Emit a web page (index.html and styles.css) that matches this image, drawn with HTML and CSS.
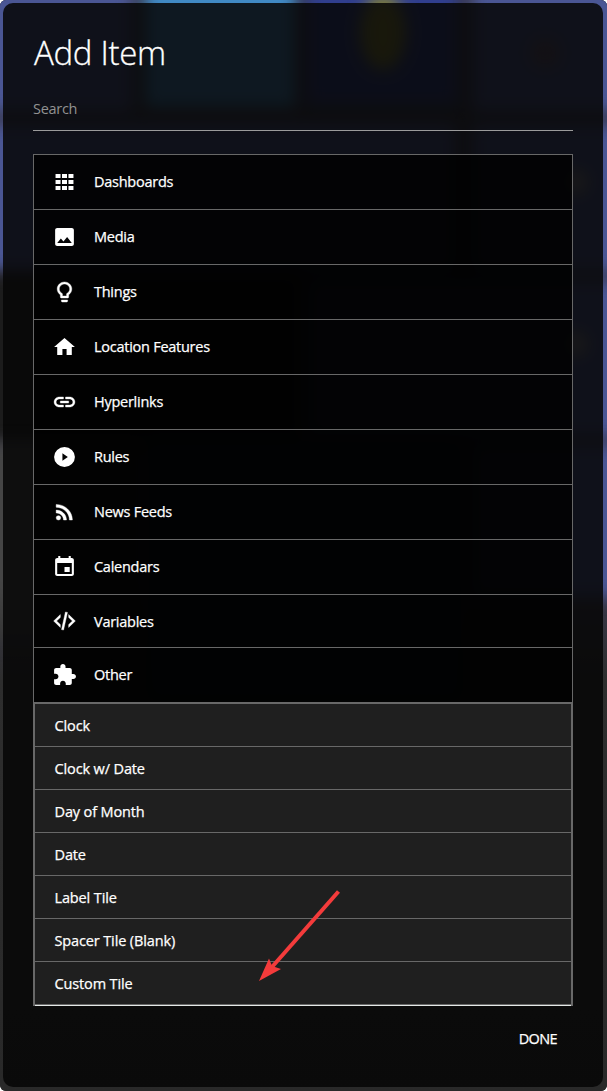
FILE: index.html
```html
<!DOCTYPE html>
<html lang="en">
<head>
<meta charset="utf-8">
<title>Add Item</title>
<link rel="stylesheet" href="styles.css">
</head>
<body>
<div class="frame">
  <div class="backdrop">
    <i class="tile t-top-left"></i><i class="tile t-cyan"></i><i class="tile t-navy"></i><i class="tile t-top-right"></i>
    <i class="tile t-row2"></i><i class="tile t-row2-right"></i><i class="tile t-row3"></i><i class="tile t-row3-right"></i>
    <i class="tile t-row4-right"></i><i class="tile t-gray"></i><i class="tile t-teal"></i>
    <i class="glow g-bulb"></i><i class="glow g-top"></i><i class="glow g-edge1"></i><i class="glow g-edge2"></i>
  </div>
  <main class="dialog">
    <h1 class="title">Add Item</h1>
    <div class="search">Search</div>
    <div class="list">
      <div class="row"><svg class="icon" viewBox="0 0 24 24" preserveAspectRatio="none"><path d="M3.4 4h4.8v4H3.4zm6.2 0h4.8v4H9.6zm6.2 0h4.8v4h-4.8zM3.4 10h4.8v4H3.4zm6.2 0h4.8v4H9.6zm6.2 0h4.8v4h-4.8zM3.4 16h4.8v4H3.4zm6.2 0h4.8v4H9.6zm6.2 0h4.8v4h-4.8z"/></svg><span class="label">Dashboards</span></div>
      <div class="row"><svg class="icon" viewBox="0 0 24 24" preserveAspectRatio="none"><path d="M21 19V5c0-1.1-.9-2-2-2H5c-1.1 0-2 .9-2 2v14c0 1.1.9 2 2 2h14c1.1 0 2-.9 2-2zM8.5 13.5l2.5 3.01L14.5 12l4.5 6H5l3.5-4.5z"/></svg><span class="label">Media</span></div>
      <div class="row"><svg class="icon bold" viewBox="0 0 24 24" preserveAspectRatio="none"><path d="M9 21c0 .55.45 1 1 1h4c.55 0 1-.45 1-1v-1H9v1zm3-19C8.14 2 5 5.14 5 9c0 2.38 1.19 4.47 3 5.74V17c0 .55.45 1 1 1h6c.55 0 1-.45 1-1v-2.26c1.81-1.27 3-3.36 3-5.74 0-3.86-3.14-7-7-7zm2.85 11.1l-.85.6V16h-4v-2.3l-.85-.6C7.8 12.16 7 10.63 7 9c0-2.76 2.24-5 5-5s5 2.240 5 5c0 1.63-.8 3.16-2.15 4.1z"/></svg><span class="label">Things</span></div>
      <div class="row"><svg class="icon" viewBox="0 0 24 24" preserveAspectRatio="none"><path d="M10 20v-6h4v6h5v-8h3L12 3 2 12h3v8z"/></svg><span class="label">Location Features</span></div>
      <div class="row"><svg class="icon bold" viewBox="0 0 24 24" preserveAspectRatio="none"><path d="M3.9 12c0-1.71 1.39-3.1 3.1-3.1h4V7H7c-2.76 0-5 2.24-5 5s2.24 5 5 5h4v-1.9H7c-1.71 0-3.1-1.39-3.1-3.1zM8 13h8v-2H8v2zm9-6h-4v1.9h4c1.71 0 3.1 1.39 3.1 3.1s-1.39 3.1-3.1 3.1h-4V17h4c2.76 0 5-2.24 5-5s-2.24-5-5-5z"/></svg><span class="label">Hyperlinks</span></div>
      <div class="row"><svg class="icon" viewBox="0 0 24 24" preserveAspectRatio="none"><path fill-rule="evenodd" d="M12 2a10 10 0 1 0 0 20a10 10 0 1 0 0-20zM10 8.2v7.6l5.2-3.8z"/></svg><span class="label">Rules</span></div>
      <div class="row"><svg class="icon bold" viewBox="0 0 24 24" preserveAspectRatio="none"><circle cx="6.18" cy="17.82" r="2.18"/><path d="M4 4.44v2.83c7.03 0 12.73 5.7 12.73 12.73h2.83c0-8.59-6.97-15.56-15.56-15.56zm0 5.66v2.83c3.9 0 7.07 3.17 7.07 7.07h2.83c0-5.47-4.43-9.9-9.9-9.9z"/></svg><span class="label">News Feeds</span></div>
      <div class="row"><svg class="icon" viewBox="0 0 24 24" preserveAspectRatio="none"><path d="M17 12h-5v5h5v-5zM16 1v2H8V1H6v2H5c-1.11 0-1.99.9-1.99 2L3 19c0 1.1.89 2 2 2h14c1.1 0 2-.9 2-2V5c0-1.1-.9-2-2-2h-1V1h-2zm3 18H5V8h14v11z"/></svg><span class="label">Calendars</span></div>
      <div class="row short"><svg class="icon bold" viewBox="0 0 24 24" preserveAspectRatio="none"><path d="M12.89 3L14.85 3.4L11.11 21L9.15 20.6L12.89 3M19.59 12L16 8.41V5.58L22.42 12L16 18.41V15.58L19.59 12M1.58 12L8 5.58V8.41L4.41 12L8 15.58V18.41L1.58 12Z"/></svg><span class="label">Variables</span></div>
      <div class="row"><svg class="icon" viewBox="0 0 24 24" preserveAspectRatio="none"><path d="M20.5 11H19V7c0-1.1-.9-2-2-2h-4V3.5C13 2.12 11.88 1 10.5 1S8 2.12 8 3.5V5H4c-1.1 0-1.99.9-1.99 2v3.8H3.5c1.49 0 2.7 1.21 2.7 2.7s-1.21 2.7-2.7 2.7H2V20c0 1.1.9 2 2 2h3.8v-1.5c0-1.49 1.21-2.7 2.7-2.7 1.49 0 2.7 1.21 2.7 2.7V22H17c1.1 0 2-.9 2-2v-4h1.5c1.38 0 2.5-1.12 2.5-2.5S21.88 11 20.5 11z"/></svg><span class="label">Other</span></div>
      <div class="sublist">
        <div class="sub">Clock</div>
        <div class="sub">Clock w/ Date</div>
        <div class="sub">Day of Month</div>
        <div class="sub">Date</div>
        <div class="sub">Label Tile</div>
        <div class="sub">Spacer Tile (Blank)</div>
        <div class="sub">Custom Tile</div>
      </div>
    </div>
    <div class="actions"><span class="done">DONE</span></div>
  </main>
  <svg class="arrow" width="84" height="94" viewBox="0 0 84 94"><path class="shaft" d="M80.5 3.5L14 79"/><path class="head" d="M1 93L11 70.5L14 78L23 81z"/></svg>
</div>
</body>
</html>
```

FILE: styles.css
```css
* { box-sizing: border-box; }
body { margin: 0; background: #fff; font-family: "Open Sans", "Noto Sans", sans-serif; color: #fff; }
.frame { position: relative; width: 607px; height: 1091px; padding: 3px 4px 4px 3px; border-radius: 6px; overflow: hidden; background: #2a2a2a; }

/* Blurred dashboard showing through the dialog */
.backdrop { position: absolute; inset: 0; background: linear-gradient(#383746 0 600px, #2e2e2e 680px, #292929); }
.tile { position: absolute; background: #4a5694; filter: blur(8px); }
.t-top-left { left: -20px; top: -20px; width: 153px; height: 132px; }
.t-cyan { left: 145px; top: -20px; width: 151px; height: 127px; background: #4089c4; }
.t-navy { left: 306px; top: -20px; width: 152px; height: 125px; background: #303e8e; }
.t-top-right { left: 472px; top: -20px; width: 160px; height: 132px; }
.t-row2 { left: -20px; top: 124px; width: 475px; height: 148px; }
.t-row2-right { left: 472px; top: 124px; width: 160px; height: 148px; }
.t-row3 { left: -20px; top: 274px; width: 320px; height: 170px; background: #1c1c1c; }
.t-row3-right { left: 308px; top: 280px; width: 326px; height: 157px; }
.t-row4-right { left: 472px; top: 444px; width: 160px; height: 153px; }
.t-gray { left: -20px; top: 443px; width: 158px; height: 200px; background: linear-gradient(#454545 70%, #363636); }
.t-teal { left: 147px; top: 440px; width: 315px; height: 260px; background: #14384e; }
.glow { position: absolute; border-radius: 50%; filter: blur(8px); }
.g-bulb { left: 360px; top: -5px; width: 46px; height: 75px; background: #87842f; }
.g-top { left: 530px; top: 38px; width: 30px; height: 30px; background: #64536a; }
.g-edge1 { left: 565px; top: 170px; width: 22px; height: 24px; background: #918c88; }
.g-edge2 { left: 565px; top: 332px; width: 22px; height: 24px; background: #918c88; }

.dialog { position: relative; display: flex; flex-direction: column; width: 600px; height: 1084px; padding: 0 30px; border-radius: 10px; background: rgba(6, 6, 6, .86); }
.title { margin: 25px 0 0 1px; height: 50px; font-size: 33px; line-height: 49px; font-weight: 300; letter-spacing: -.3px; -webkit-text-stroke: .3px #fff; }
.search { margin-top: 17px; height: 36px; border-bottom: 1px solid #9b9b9b; font-size: 14.5px; line-height: 28px; letter-spacing: -.3px; color: #929292; }
.list { margin-top: 23px; height: 852px; border: 1px solid #686868; border-bottom: 0; background: rgba(0, 0, 0, .8); }
.row { display: flex; align-items: center; gap: 17.5px; height: 55px; padding-left: 17.5px; border-bottom: 1px solid #686868; }
.row.short { height: 53px; }
.row.short .label { padding-top: 2px; }
.icon { width: 25px; height: 24px; flex: none; fill: #fff; }
.bold { stroke: #fff; stroke-width: .4; }
.label, .sub, .done { font-size: 14.5px; -webkit-text-stroke: .25px #fff; }
.label { line-height: 20px; letter-spacing: -.26px; white-space: nowrap; }
.sublist { border: solid #686868; border-width: 1px 1px 0; background: #1f1f1f; }
.sub { height: 43px; padding-left: 19.5px; border-bottom: 1px solid #686868; line-height: 43px; letter-spacing: -.13px; }
.sub:last-child { height: 44px; border-bottom: 1px solid #e4e8e6; box-shadow: inset 0 -1px #686868; }
.actions { display: flex; justify-content: flex-end; padding: 21px 16px 0 0; }
.done { line-height: 24px; letter-spacing: -.6px; }
.arrow { position: absolute; left: 258px; top: 888px; }
.shaft { stroke: #f43b3b; stroke-width: 4; }
.head { fill: #f43b3b; }
```
